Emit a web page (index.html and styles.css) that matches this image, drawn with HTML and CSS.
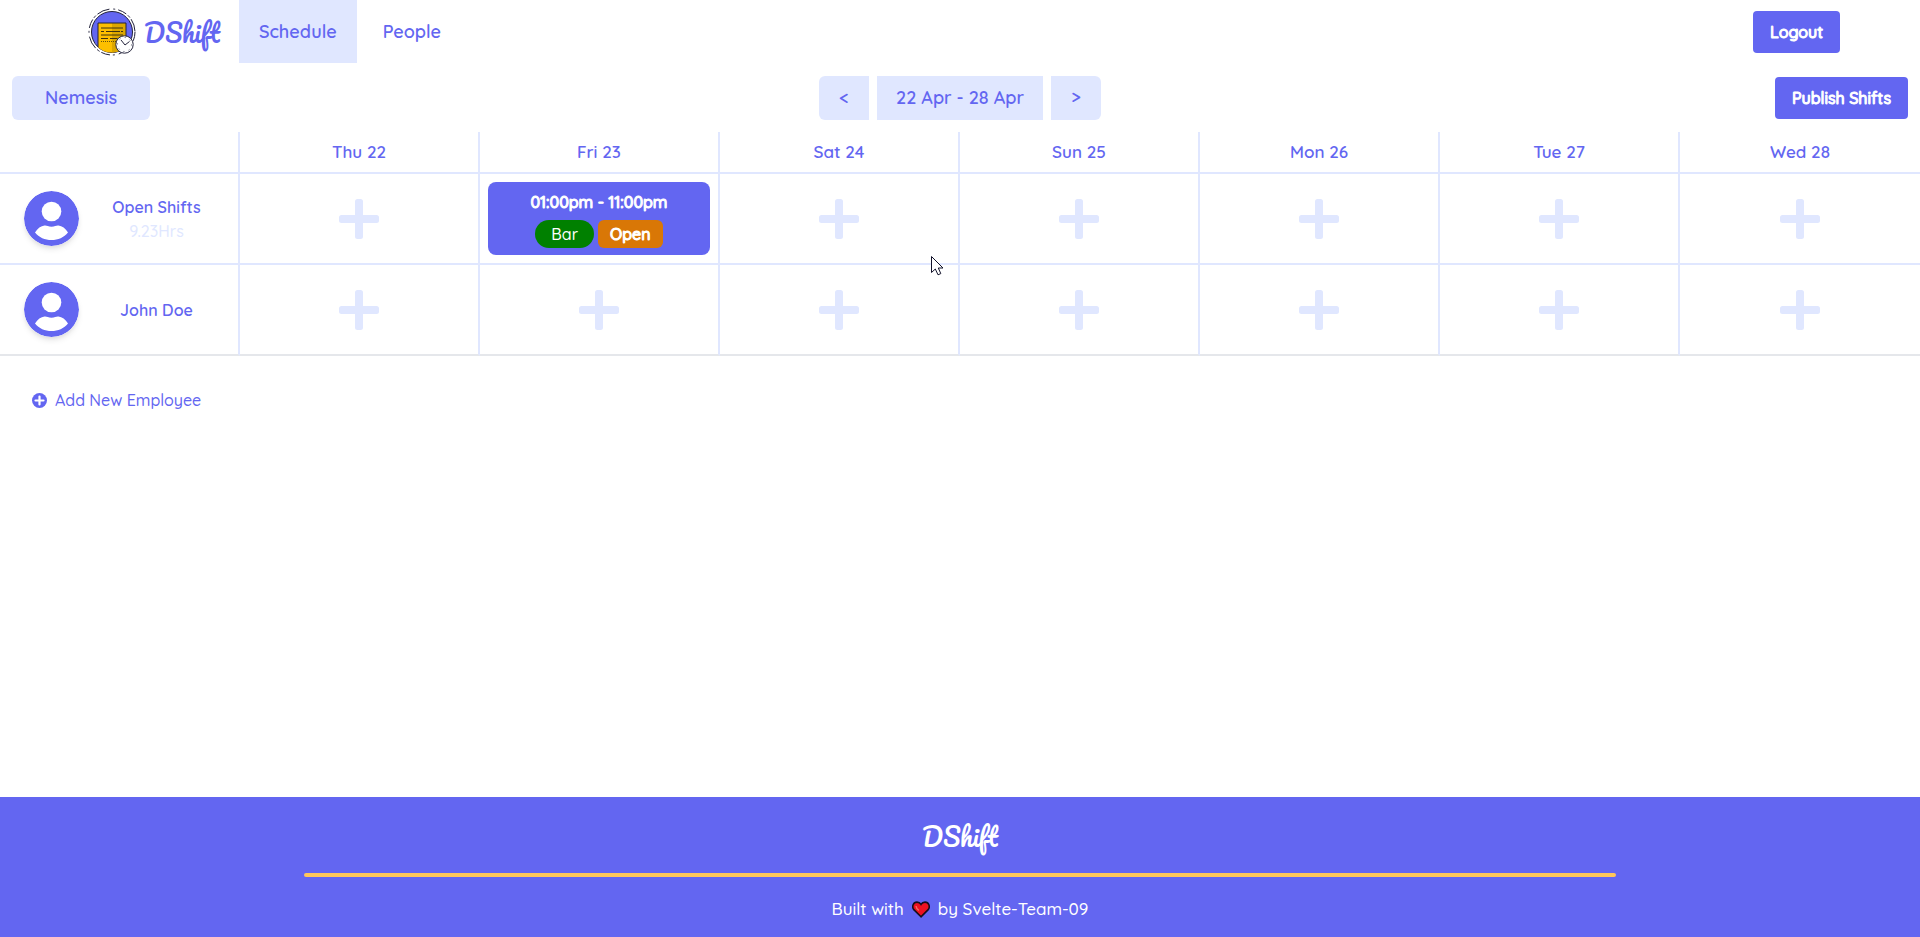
FILE: index.html
```html
<!DOCTYPE html>
<html lang="en">
<head>
<meta charset="utf-8">
<title>DShift</title>
<link rel="stylesheet" href="styles.css">
</head>
<body>
<svg class="sprite" aria-hidden="true">
  <symbol id="plus" viewBox="0 0 40 40"><rect x="16" width="8" height="40" rx="2.5"/><rect y="16" width="40" height="8" rx="2.5"/></symbol>
  <symbol id="user" viewBox="0 0 55 55">
    <circle cx="27.500" cy="27.500" r="27.500" fill="#6366f1"/>
    <circle cx="27.500" cy="20.500" r="9.800" fill="#fff"/>
    <path d="M11 41.500C13.500 37.500 17 35 20.500 34.600C23 34.400 24 35.700 27.500 35.700C31 35.700 32 34.400 34.500 34.600C38 35 41.500 37.500 44 41.500C40 46.500 34 49 27.500 49C21 49 15 46.500 11 41.500Z" fill="#fff"/>
  </symbol>
</svg>
<header class="nav">
  <a class="brand" href="#">
    <svg class="brand-icon" viewBox="0 0 48 48" aria-hidden="true">
      <circle cx="24" cy="24" r="23" fill="none" stroke="#23233b" stroke-width="1" stroke-dasharray="9 2 3 2 13 4 2 3"/>
      <circle cx="24" cy="24" r="20.500" fill="#6366f1" stroke="#23233b" stroke-width="1"/>
      <path d="M10 15H38V38Q32 44.500 24 44.500Q15 44.500 10 39Z" fill="#fdbf00"/>
      <path d="M24 15H38V38Q32 44.500 24 44.500Z" fill="#dca700"/>
      <path d="M10 39V15H38V31" fill="none" stroke="#23233b" stroke-width="1"/>
      <path d="M13 20H35M13 23.500H16M18 23.500H32M33 23.500H35M13 27H35M13 30.500H20M22 30.500H30" stroke="#3c3211" stroke-width="1"/>
      <path d="M13 33.500H28" stroke="#3c3211" stroke-width=".8" stroke-dasharray="1 1"/>
      <circle cx="36.500" cy="36.500" r="8.700" fill="#fff" stroke="#23233b" stroke-width="1"/>
      <path d="M33 32L37 37L41.500 33.500" fill="none" stroke="#23233b" stroke-width="1"/>
      <circle cx="36.500" cy="36.500" r="7" fill="none" stroke="#23233b" stroke-width=".8" stroke-dasharray="1 4.500"/>
    </svg>
    <span class="wordmark">DShift</span>
  </a>
  <nav class="tabs">
    <a class="tab tab-active" href="#">Schedule</a>
    <a class="tab" href="#">People</a>
  </nav>
  <button class="button">Logout</button>
</header>
<main class="main">
  <div class="toolbar">
    <div><button class="soft team">Nemesis</button></div>
    <div class="week">
      <button class="soft step prev" aria-label="Previous week">&lt;</button>
      <button class="soft range">22 Apr - 28 Apr</button>
      <button class="soft step next" aria-label="Next week">&gt;</button>
    </div>
    <div class="end"><button class="button">Publish Shifts</button></div>
  </div>
  <table class="schedule">
    <thead>
      <tr><td class="who"></td><th>Thu 22</th><th>Fri 23</th><th>Sat 24</th><th>Sun 25</th><th>Mon 26</th><th>Tue 27</th><th>Wed 28</th></tr>
    </thead>
    <tbody>
      <tr>
        <th class="who"><div class="person"><svg class="avatar"><use href="#user"/></svg><div class="name">Open Shifts<span class="hours">9.23Hrs</span></div></div></th>
        <td><button class="add" aria-label="Add shift"><svg><use href="#plus"/></svg></button></td>
        <td><div class="shift"><div>01:00pm - 11:00pm</div><div class="tags"><span class="tag role">Bar</span><span class="tag open">Open</span></div></div></td>
        <td><button class="add" aria-label="Add shift"><svg><use href="#plus"/></svg></button></td>
        <td><button class="add" aria-label="Add shift"><svg><use href="#plus"/></svg></button></td>
        <td><button class="add" aria-label="Add shift"><svg><use href="#plus"/></svg></button></td>
        <td><button class="add" aria-label="Add shift"><svg><use href="#plus"/></svg></button></td>
        <td><button class="add" aria-label="Add shift"><svg><use href="#plus"/></svg></button></td>
      </tr>
      <tr>
        <th class="who"><div class="person"><svg class="avatar"><use href="#user"/></svg><div class="name">John Doe</div></div></th>
        <td><button class="add" aria-label="Add shift"><svg><use href="#plus"/></svg></button></td>
        <td><button class="add" aria-label="Add shift"><svg><use href="#plus"/></svg></button></td>
        <td><button class="add" aria-label="Add shift"><svg><use href="#plus"/></svg></button></td>
        <td><button class="add" aria-label="Add shift"><svg><use href="#plus"/></svg></button></td>
        <td><button class="add" aria-label="Add shift"><svg><use href="#plus"/></svg></button></td>
        <td><button class="add" aria-label="Add shift"><svg><use href="#plus"/></svg></button></td>
        <td><button class="add" aria-label="Add shift"><svg><use href="#plus"/></svg></button></td>
      </tr>
    </tbody>
  </table>
  <button class="new-employee">
    <svg class="new-icon" viewBox="0 0 15 15" aria-hidden="true"><circle cx="7.500" cy="7.500" r="7.500" fill="#6366f1"/><path d="M7.500 3.500V11.500M3.500 7.500H11.500" stroke="#fff" stroke-width="2.200" stroke-linecap="round"/></svg>
    Add New Employee
  </button>
</main>
<footer class="footer">
  <div class="wordmark">DShift</div>
  <hr class="rule">
  <p class="credit">Built with
    <svg class="heart" viewBox="0 0 18 17" role="img" aria-label="love"><path d="M9 15.800L1.600 8.400C-.2 5.800 1 1.100 5 1.100C7 1.100 8.300 2.200 9 3.400C9.700 2.200 11 1.100 13 1.100C17 1.100 18.200 5.800 16.400 8.400Z" fill="#ed1120" stroke="#160f1c" stroke-width="1.600"/><path d="M4 5Q4.300 7.700 6.800 9.300" fill="none" stroke="#f46a62" stroke-width="1.400"/></svg>
    by Svelte-Team-09</p>
</footer>
<svg class="pointer" viewBox="0 0 13 20" aria-hidden="true"><path d="M.5 .5V16.500L4.300 13L7 18.800L9.800 17.600L7.300 12H12Z" fill="#fff" stroke="#12122a"/></svg>
</body>
</html>
```
FILE: styles.css
```css
* { box-sizing: border-box; }
body {
  margin: 0;
  min-height: 100vh;
  display: flex;
  flex-direction: column;
  background: #fff;
  color: #6366f1;
  font: 500 16px/24px Quicksand, Lato, sans-serif;
}
button { border: 0; font: inherit; color: inherit; cursor: pointer; }
a { color: inherit; text-decoration: none; }
.sprite { position: absolute; width: 0; height: 0; }
.nav { display: flex; height: 63px; padding: 0 80px 0 88px; align-items: center; }
.brand { display: flex; align-items: center; gap: 8px; width: 151px; }
.brand-icon { width: 48px; height: 48px; flex: none; }
.wordmark { font: 400 25px/40px Pacifico, Lato, cursive; }
.tabs { display: flex; flex: 1; align-self: stretch; gap: 6px; font-size: 18px; font-weight: 600; }
.tab { display: flex; align-items: center; padding: 0 20px; }
.tab-active { background: #e0e7ff; }
.button {
  height: 42px;
  padding: 0 17px;
  border-radius: 4px;
  background: #6366f1;
  color: #fff;
  -webkit-text-stroke: 1px;
}
.main { flex: 1; }
.toolbar {
  display: grid;
  grid-template-columns: 1fr auto 1fr;
  align-items: center;
  height: 69px;
  padding: 1px 12px 0;
}
.week { display: flex; gap: 8px; }
.end { text-align: right; }
.soft { height: 44px; padding: 0; background: #e0e7ff; font-size: 18px; font-weight: 600; }
.team { padding: 0 33px; border-radius: 6px; }
.step { width: 50px; }
.prev { border-radius: 6px 0 0 6px; }
.next { border-radius: 0 6px 6px 0; }
.range { padding: 0 19px; }
.schedule { width: 100%; border-spacing: 0; table-layout: fixed; }
.schedule th, .schedule td { height: 91px; padding: 0; font-weight: 600; text-align: center; border: 0 solid #e0e7ff; border-width: 0 2px 2px 0; }
.schedule thead th, .schedule thead td { height: 42px; font-size: 17px; }
.schedule tr > :last-child { border-right: 0; }
.schedule tbody tr:last-child > * { border-bottom-color: #e5e7eb; }
.schedule .who { width: 12.5%; }
.person { display: flex; align-items: center; padding-left: 24px; }
.avatar { flex: none; width: 55px; height: 55px; border-radius: 50%; box-shadow: 0 4px 6px -1px #0000001a, 0 2px 4px -1px #0000000f; }
.name { flex: 1; padding-right: 4px; }
.hours { display: block; color: #e0e7ff; font-weight: 500; }
.add { display: block; margin: 0 auto; padding: 0; background: none; }
.add svg { display: block; width: 40px; height: 40px; fill: #e0e7ff; }
.shift { margin: 0 8px; height: 73px; padding: 8px; border-radius: 8px; background: #6366f1; color: #fff; font-weight: 500; -webkit-text-stroke: 1px; }
.tags { display: flex; justify-content: center; gap: 4px; padding-top: 6px; }
.tag { height: 28px; line-height: 28px; }
.role { padding: 0 16px; border-radius: 14px; background: #008000; -webkit-text-stroke: 0; }
.open { padding: 0 12px; border-radius: 6px; background: #d97706; }
.new-employee { display: flex; align-items: center; gap: 8px; margin: 32px 0 0 32px; padding: 0; background: none; }
.new-icon { width: 15px; height: 15px; }
.footer { height: 140px; padding: 19px 16px 0; background: #6366f1; color: #fff; text-align: center; }
.rule { max-width: 1312px; height: 4px; margin: 17px auto 20px; border: 0; border-radius: 2px; background: #ffc75a; }
.credit { display: flex; justify-content: center; align-items: center; gap: 8px; margin: 0; font-size: 17px; }
.heart { width: 18px; height: 17px; }
.pointer { position: absolute; left: 931px; top: 256px; width: 13px; height: 20px; }
```
